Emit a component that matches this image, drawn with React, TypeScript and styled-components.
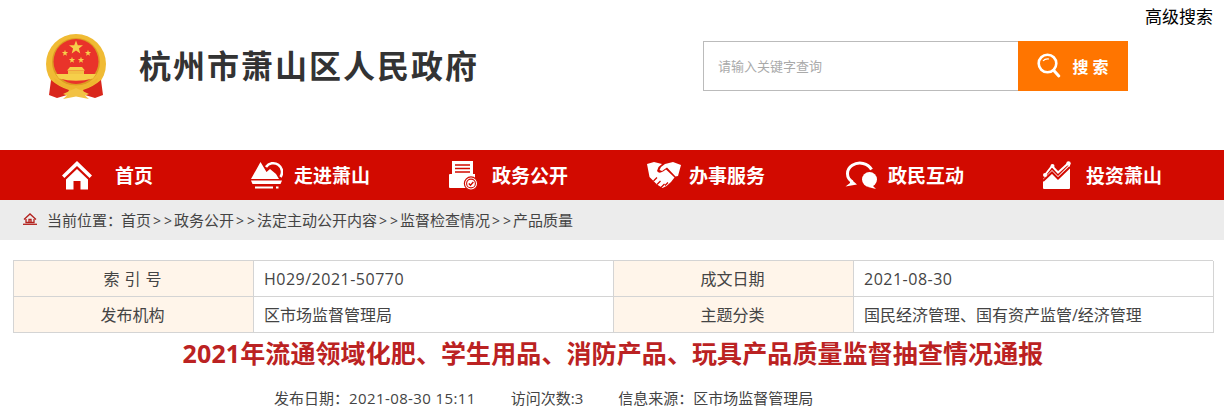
import { Fragment } from "react";
import styled, { createGlobalStyle } from "styled-components";

const GlobalStyle = createGlobalStyle`
  html, body {
    margin: 0;
    padding: 0;
    background: #fff;
    font-family: "Open Sans", "Noto Sans CJK SC", sans-serif;
    overflow: hidden;
  }
`;

const Star = ({ x, y, scale = 0.45 }: { x: number; y: number; scale?: number }) => (
  <path
    transform={`translate(${x} ${y}) scale(${scale})`}
    d="M0 -7 L1.8 -2.2 L7 -2.2 L2.9 1 L4.3 6 L0 3.1 L-4.3 6 L-2.9 1 L-7 -2.2 L-1.8 -2.2Z"
    fill="#f6cf4a"
  />
);

const Emblem = () => (
  <svg width="62" height="68" viewBox="0 0 62 68">
    <circle cx="31" cy="31" r="30" fill="#f0bb34" />
    <circle cx="31" cy="29" r="24" fill="#dd9c22" />
    <circle cx="31" cy="28.5" r="22.5" fill="#e9332a" />
    <Star x={31} y={14.5} scale={1} />
    <Star x={20} y={20} />
    <Star x={43} y={20} />
    <Star x={27} y={27} />
    <Star x={36} y={27} />
    <path d="M25 34 H37 L40 37.5 H22Z" fill="#f6cf4a" />
    <path d="M23 37.5 H39 V41 H23Z" fill="#f2c244" />
    <path d="M11 41 H51 L48 45.5 Q31 50 14 45.5Z" fill="#f6cf4a" />
    <path d="M6 47 Q14 54 24 57 L22 62 L12 65 L4 62Z" fill="#d9261c" />
    <path d="M56 47 Q48 54 38 57 L40 62 L50 65 L58 62Z" fill="#d9261c" />
    <path d="M9 45 Q31 60 53 45 L51 50 Q31 64 11 50Z" fill="#eeb52f" />
    <path d="M18 61 L31 55 L44 61 L40 62.5 L44 66 L31 63.5 L18 66 L22 62.5Z" fill="#f2c244" />
  </svg>
);

const SearchGlass = () => (
  <svg width="24" height="26" viewBox="0 0 24 26" fill="none" stroke="#fff">
    <circle cx="10.5" cy="10.5" r="8.8" strokeWidth="2.6" />
    <path d="M16.8 17.5 L21.8 23" strokeWidth="3" strokeLinecap="round" />
    <path d="M6 8 Q8 5.5 12 6" strokeWidth="1.2" />
  </svg>
);

const HomeIcon = () => (
  <svg width="30" height="29" viewBox="0 0 30 29" fill="#fff">
    <path d="M15 0 L30 14.5 L27.6 17 L15 5 L2.4 17 L0 14.5Z" />
    <path d="M15 8 L26 18.5 V28.5 H18.5 V20 H11.5 V28.5 H4 V18.5Z" />
  </svg>
);

const MountainIcon = () => (
  <svg width="32" height="29" viewBox="0 0 32 29" fill="#fff">
    <path d="M15 6 A8.6 8.6 0 1 1 29.5 16" fill="none" stroke="#fff" strokeWidth="2.6" />
    <path d="M0 18 L9.5 1 L15.5 11 L19 8 L25 13 L28 18Z" />
    <path d="M0 19.5 H31 L29.5 23 H1.5Z" />
    <path d="M4 25.5 H22 V27.5 H4Z" />
    <path d="M25 25.5 H27.5 V27.5 H25Z" />
  </svg>
);

const DocIcon = () => (
  <svg width="29" height="30" viewBox="0 0 29 30">
    <path d="M3 1 H24 V15 H3Z" fill="#fff" />
    <path d="M6 5 H21 M6 8.5 H21 M6 12 H21" stroke="#d20a00" strokeWidth="1.4" />
    <path d="M1 14 H26 V28 H1Q0 28 0 27V15Q0 14 1 14Z" fill="#fff" />
    <circle cx="22" cy="23.5" r="6.6" fill="#fff" stroke="#d20a00" strokeWidth="1.2" />
    <circle cx="22" cy="23.5" r="4.4" fill="none" stroke="#d20a00" strokeWidth="1.1" />
    <path d="M19.8 23.4 L21.5 25.2 L24.4 22" fill="none" stroke="#d20a00" strokeWidth="1.4" />
  </svg>
);

const ShakeIcon = () => (
  <svg width="34" height="26" viewBox="0 0 34 26" fill="#fff">
    <path d="M0 2 L7 0 L15 2 L11.5 5 L10 9 Q12 12 16 9.5 L19 7.5 L27.5 15.5 L24 20 L19.5 24 L15.5 26 L10 22.5 L5 17.5 L2.5 15Z" />
    <path d="M18 2 L26 0 L34 3 L31 14 L28.5 14.5 L20 5.5 L15 9 L12.5 8 L14 5Z" />
    <path d="M6.5 19 L10 15.5 M10 22.5 L13.5 19 M14 25.5 L17.5 22 M18 23.5 L21 20.5" stroke="#d20a00" strokeWidth="1.3" />
  </svg>
);

const ChatIcon = () => (
  <svg width="33" height="30" viewBox="0 0 33 30" fill="none">
    <path d="M7.5 22 A12.5 10.5 0 1 1 26.5 9.5" stroke="#fff" strokeWidth="3" />
    <path d="M5 19 L8 21 L12 24.5 L0.5 26.5 L5 23Z" fill="#fff" />
    <circle cx="24.5" cy="19.5" r="7.5" fill="#fff" />
    <path d="M27 25 L31 29 L23 27Z" fill="#fff" />
  </svg>
);

const ChartIcon = () => (
  <svg width="28" height="29" viewBox="0 0 28 29" fill="none">
    <path d="M0 18 L9 9 L15 15 L27 3 V27 Q27 28 26 28 H1 Q0 28 0 27Z" fill="#fff" />
    <path d="M2 14 L9 5 L15 11.5 L25 2.5" stroke="#fff" strokeWidth="2" />
    <path d="M0 20 L9 11.5 L15 17.5 L27 6" stroke="#d20a00" strokeWidth="2" />
    <circle cx="2" cy="14" r="2" fill="#fff" />
    <circle cx="9.5" cy="5" r="2" fill="#fff" />
    <circle cx="25.5" cy="2.5" r="2.2" fill="#fff" />
  </svg>
);

const BreadcrumbHome = () => (
  <svg width="14" height="12" viewBox="0 0 14 12" fill="none" stroke="#b3201c" strokeWidth="1.3">
    <path d="M1 6.5 L7 1 L13 6.5" />
    <path d="M3 6 V9.5 H11 V6" />
    <path d="M6 9.5 V6.5 H8 V9.5" />
    <path d="M0 11.3 H14" />
  </svg>
);

const navItems = [
  { label: "首页", icon: <HomeIcon />, width: 189, gap: 23 },
  { label: "走进萧山", icon: <MountainIcon />, width: 198, gap: 11 },
  { label: "政务公开", icon: <DocIcon />, width: 198, gap: 14 },
  { label: "办事服务", icon: <ShakeIcon />, width: 198, gap: 8 },
  { label: "政民互动", icon: <ChatIcon />, width: 198, gap: 10 },
  { label: "投资萧山", icon: <ChartIcon />, width: 181, gap: 15 },
];

const crumbs = ["首页", "政务公开", "法定主动公开内容", "监督检查情况", "产品质量"];

const Page = styled.div`
  width: 1224px;
  height: 418px;
  overflow: hidden;
`;

const Header = styled.header`
  height: 150px;
`;

const TopLinks = styled.div`
  height: 33px;
  display: flex;
  justify-content: flex-end;
  padding: 5px 11px 0 0;
  box-sizing: border-box;
`;

const TopLink = styled.a`
  font-size: 17px;
  line-height: 24px;
  color: #000;
`;

const BrandRow = styled.div`
  display: flex;
  align-items: flex-start;
  padding: 0 96px 0 45px;
`;

const SiteName = styled.h1`
  margin: 8px 0 0 32px;
  font-size: 32px;
  line-height: 50px;
  font-weight: 700;
  letter-spacing: 2px;
  color: #333;
  white-space: nowrap;
`;

const SearchBox = styled.form`
  margin: 8px 0 0 auto;
  width: 425px;
  height: 50px;
  display: flex;
`;

const SearchInput = styled.div`
  flex: 1;
  box-sizing: border-box;
  border: 1px solid #bbb;
  border-right: 0;
  padding-left: 14px;
  font-size: 13px;
  line-height: 48px;
  color: #aaa;
`;

const SearchButton = styled.button`
  width: 110px;
  border: 0;
  padding: 0 0 0 4px;
  background: #ff7500;
  color: #fff;
  font-family: inherit;
  font-size: 16px;
  font-weight: 700;
  letter-spacing: 4px;
  display: flex;
  align-items: center;
  justify-content: center;
  gap: 11px;
`;

const Nav = styled.nav`
  height: 50px;
  background: #d20a00;
  display: flex;
  padding-left: 62px;
`;

const NavItem = styled.a<{ $width: number; $gap: number }>`
  width: ${(p) => p.$width}px;
  display: flex;
  align-items: center;
  gap: ${(p) => p.$gap}px;
  color: #fff;
  font-size: 19px;
  font-weight: 700;
  white-space: nowrap;
`;

const Breadcrumb = styled.div`
  height: 40px;
  background: #ececec;
  display: flex;
  align-items: center;
  gap: 10px;
  padding: 0 0 2px 23px;
  box-sizing: border-box;
  font-size: 15px;
  color: #444;
`;

const CrumbLead = styled.span`
  margin-right: -1px;
`;

const CrumbSep = styled.span`
  display: inline-block;
  width: 23px;
  padding-left: 2px;
  box-sizing: border-box;
  letter-spacing: 3px;
  font-size: 14px;
`;

const Content = styled.main`
  padding: 20px 11px 0 13px;
`;

const MetaTable = styled.div`
  display: grid;
  grid-template-columns: 240px 360px 240px 360px;
  border-top: 1px solid #d4d4d4;
  border-left: 1px solid #d4d4d4;
  box-sizing: border-box;
  width: 1200px;
`;

const MetaLabel = styled.div<{ $wide?: boolean }>`
  height: 36px;
  box-sizing: border-box;
  border-right: 1px solid #d4d4d4;
  border-bottom: 1px solid #d4d4d4;
  padding-right: 2px;
  background: #fff5ea;
  font-size: 16px;
  line-height: 36px;
  text-align: center;
  color: #444;
  letter-spacing: ${(p) => (p.$wide ? "5px" : "0")};
  text-indent: ${(p) => (p.$wide ? "5px" : "0")};
`;

const MetaValue = styled.div<{ $digits?: boolean }>`
  height: 36px;
  box-sizing: border-box;
  border-right: 1px solid #d4d4d4;
  border-bottom: 1px solid #d4d4d4;
  padding-left: 10px;
  font-size: 16px;
  line-height: 36px;
  color: #444;
  letter-spacing: ${(p) => (p.$digits ? "0.5px" : "0")};
`;

const Title = styled.h2`
  margin: 0;
  font-size: 25px;
  line-height: 40px;
  font-weight: 700;
  letter-spacing: 0.1px;
  text-align: center;
  color: #bb2222;
  white-space: nowrap;
`;

const Info = styled.div`
  margin-top: 13px;
  padding-left: 261px;
  display: flex;
  gap: 35px;
  font-size: 15px;
  line-height: 24px;
  color: #444;
`;

const InfoDigits = styled.span`
  letter-spacing: 0.4px;
`;

export default function App() {
  return (
    <Page>
      <GlobalStyle />
      <Header>
        <TopLinks>
          <TopLink>高级搜索</TopLink>
        </TopLinks>
        <BrandRow>
          <Emblem />
          <SiteName>杭州市萧山区人民政府</SiteName>
          <SearchBox>
            <SearchInput>请输入关键字查询</SearchInput>
            <SearchButton type="button">
              <SearchGlass />
              搜索
            </SearchButton>
          </SearchBox>
        </BrandRow>
      </Header>
      <Nav>
        {navItems.map((item) => (
          <NavItem key={item.label} $width={item.width} $gap={item.gap}>
            {item.icon}
            {item.label}
          </NavItem>
        ))}
      </Nav>
      <Breadcrumb>
        <BreadcrumbHome />
        <span>
          <CrumbLead>当前位置：</CrumbLead>
          {crumbs.map((crumb, i) => (
            <Fragment key={crumb}>
              {i > 0 && <CrumbSep>&gt;&gt;</CrumbSep>}
              {crumb}
            </Fragment>
          ))}
        </span>
      </Breadcrumb>
      <Content>
        <MetaTable>
          <MetaLabel $wide>索引号</MetaLabel>
          <MetaValue $digits>H029/2021-50770</MetaValue>
          <MetaLabel>成文日期</MetaLabel>
          <MetaValue $digits>2021-08-30</MetaValue>
          <MetaLabel>发布机构</MetaLabel>
          <MetaValue>区市场监督管理局</MetaValue>
          <MetaLabel>主题分类</MetaLabel>
          <MetaValue>国民经济管理、国有资产监管/经济管理</MetaValue>
        </MetaTable>
        <Title>2021年流通领域化肥、学生用品、消防产品、玩具产品质量监督抽查情况通报</Title>
        <Info>
          <span>
            发布日期：<InfoDigits>2021-08-30 15:11</InfoDigits>
          </span>
          <span>访问次数:3</span>
          <span>信息来源：区市场监督管理局</span>
        </Info>
      </Content>
    </Page>
  );
}
